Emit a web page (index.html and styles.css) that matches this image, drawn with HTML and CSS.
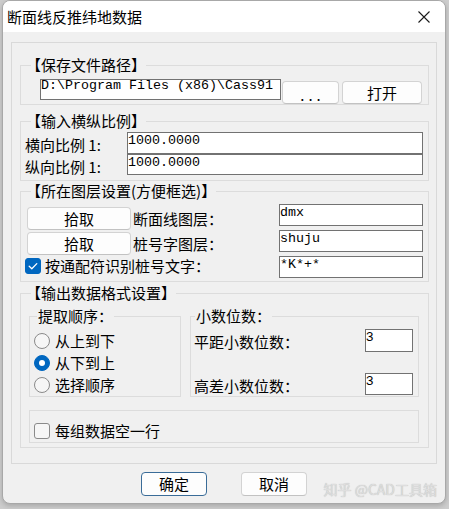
FILE: index.html
```html
<!DOCTYPE html>
<html lang="zh-CN">
<head>
<meta charset="utf-8">
<title>断面线反推纬地数据</title>
<link rel="stylesheet" href="styles.css">
</head>
<body>
<div class="window">
  <div class="titlebar">
    <span class="title">断面线反推纬地数据</span>
    <svg class="close" width="12" height="12" viewBox="0 0 12 12"><path d="M0.5 0.5 L11.5 11.5 M11.5 0.5 L0.5 11.5" stroke="#1a1a1a" stroke-width="1.1" fill="none"/></svg>
  </div>
  <div class="client">
    <div class="panel">
      <div class="group g1">
        <div class="legend">【保存文件路径】</div>
        <div class="path-row">
          <div class="edit mono path">D:\Program Files (x86)\Cass91</div>
          <div class="btn btn-dots">...</div>
          <div class="btn btn-open">打开</div>
        </div>
      </div>
      <div class="group g2">
        <div class="legend">【输入横纵比例】</div>
        <div class="scale-grid">
          <div class="lbl">横向比例 1:</div>
          <div class="edit mono">1000.0000</div>
          <div class="lbl">纵向比例 1:</div>
          <div class="edit mono">1000.0000</div>
        </div>
      </div>
      <div class="group g3">
        <div class="legend">【所在图层设置(方便框选)】</div>
        <div class="layer-row r1">
          <div class="btn">拾取</div>
          <div class="lbl">断面线图层：</div>
          <div class="edit mono">dmx</div>
        </div>
        <div class="layer-row r2">
          <div class="btn">拾取</div>
          <div class="lbl">桩号字图层：</div>
          <div class="edit mono">shuju</div>
        </div>
        <div class="layer-row r3">
          <span class="check on"><svg width="16" height="16" viewBox="0 0 16 16"><path d="M4.2 8.3 L6.8 10.8 L11.8 5.6" stroke="#fff" stroke-width="1.3" fill="none" stroke-linecap="round" stroke-linejoin="round"/></svg></span>
          <div class="lbl">按通配符识别桩号文字：</div>
          <div class="edit mono">*K*+*</div>
        </div>
      </div>
      <div class="group g4">
        <div class="legend">【输出数据格式设置】</div>
        <div class="sub-row">
          <div class="sub sg1">
            <div class="sublegend">提取顺序：</div>
            <div class="radios">
              <div class="radio-row"><span class="radio"></span><span class="rlbl">从上到下</span></div>
              <div class="radio-row"><span class="radio on"></span><span class="rlbl">从下到上</span></div>
              <div class="radio-row"><span class="radio"></span><span class="rlbl">选择顺序</span></div>
            </div>
          </div>
          <div class="sub sg2">
            <div class="sublegend">小数位数：</div>
            <div class="dec-row d1">
              <div class="lbl">平距小数位数：</div>
              <div class="edit num">3</div>
            </div>
            <div class="dec-row d2">
              <div class="lbl">高差小数位数：</div>
              <div class="edit num">3</div>
            </div>
          </div>
        </div>
        <div class="sub blank-box">
          <div class="blank-row">
            <span class="check"></span>
            <span class="rlbl">每组数据空一行</span>
          </div>
        </div>
      </div>
    </div>
    <div class="footer">
      <div class="btn btn-ok">确定</div>
      <div class="btn btn-cancel">取消</div>
    </div>
  </div>
  <div class="watermark">知乎 @CAD工具箱</div>
</div>
</body>
</html>
```
FILE: styles.css
```css
* { box-sizing: border-box; }
html, body { margin: 0; padding: 0; }
body {
  width: 449px;
  height: 509px;
  overflow: hidden;
  background: #cdcdcd;
  font-family: "Noto Sans CJK SC", "Noto Sans", sans-serif;
  font-size: 15px;
  color: #000;
}
.window {
  position: relative;
  margin-left: 2px;
  width: 444px;
  height: 504px;
  border: 1px solid #a8a8a8;
  border-radius: 8px;
  overflow: hidden;
  background: #f0f0f0;
  display: flex;
  flex-direction: column;
  box-shadow: 0 2px 5px rgba(0,0,0,0.18);
}
.titlebar {
  flex: none;
  height: 31px;
  background: #fff;
  display: flex;
  align-items: center;
  padding-left: 4px;
}
.title { line-height: 31px; }
.close { margin-left: auto; margin-right: 15px; }
.client { flex: 1; padding-top: 10px; }
.panel {
  margin-left: 8px;
  width: 426px;
  height: 422px;
  border: 1px solid #d9d9d9;
  padding: 0 7px 0 8px;
}
.group { border: 1px solid #dcdcdc; }
.legend {
  width: fit-content;
  margin: -11px 0 0 10px;
  text-indent: -5px;
  line-height: 20px;
  background: #f0f0f0;
  white-space: nowrap;
}
.g1 { margin-top: 22px; height: 40px; }
.g2 { margin-top: 16px; height: 60px; }
.g3 { margin-top: 10px; height: 91px; }
.g4 { margin-top: 11px; height: 155px; }

.edit {
  background: #fff;
  border: 1px solid #727272;
  white-space: nowrap;
  overflow: hidden;
}
.mono {
  font-family: "Liberation Mono", monospace;
  font-size: 13.33px;
  line-height: 16px;
}
.num {
  font-family: "Liberation Sans", sans-serif;
  font-size: 13.33px;
  line-height: 13px;
}
.btn {
  background: #fdfdfd;
  border: 1px solid #d3d3d3;
  border-bottom-color: #c2c2c2;
  border-radius: 4px;
  display: flex;
  align-items: center;
  justify-content: center;
  line-height: 20px;
}
.lbl { line-height: 22px; white-space: nowrap; }

.path-row { display: flex; align-items: flex-start; margin-top: 4px; }
.path { margin-left: 19px; width: 241px; height: 21px; line-height: 12px; }
.btn-dots { margin: 2px 0 0 1px; width: 57px; height: 23px; letter-spacing: 4px; padding: 4px 0 0 4px; }
.btn-open { margin: 2px 0 0 3px; width: 80px; height: 23px; }

.scale-grid {
  display: grid;
  grid-template-columns: 106px 296px;
  grid-template-rows: 22px 21px;
  margin-top: 1px;
}
.scale-grid .lbl { padding-left: 4px; margin-top: 2px; }

.layer-row { display: flex; align-items: flex-start; height: 26px; }
.r1 { margin-top: 3px; }
.r3 { height: 22px; }
.layer-row .btn { margin: 3px 0 0 6px; width: 104px; height: 23px; }
.r2 .btn { margin-top: 2px; }
.layer-row .lbl { margin: 4px 0 0 2px; }
.r2 .lbl { margin-top: 3px; }
.r3 .lbl { margin: 0 0 0 4px; line-height: 20px; }
.layer-row .edit { margin-left: auto; margin-right: 5px; width: 144px; height: 22px; }

.check {
  flex: none;
  display: block;
  width: 16px;
  height: 16px;
  border: 1px solid #8a8a8a;
  border-radius: 3px;
  background: #f6f6f6;
}
.check.on { background: #0067c0; border-color: #0067c0; }
.check svg { display: block; margin: -1px; }
.r3 .check { margin: 2px 0 0 4px; }

.sub-row { display: flex; margin: 13px 0 0 8px; gap: 9px; }
.sub { border: 1px solid #dcdcdc; }
.sg1 { width: 152px; height: 81px; }
.sg2 { width: 229px; height: 81px; }
.sublegend {
  width: fit-content;
  margin-top: -11px;
  padding: 0 1px;
  line-height: 20px;
  background: #f0f0f0;
  white-space: nowrap;
}
.sg1 .sublegend { margin-left: 7px; }
.sg2 .sublegend { margin-left: 4px; }
.radios { margin-top: 4px; }
.radio-row { display: flex; align-items: center; height: 22px; }
.radio {
  flex: none;
  width: 16px;
  height: 16px;
  margin-left: 4px;
  border-radius: 50%;
  border: 1px solid #8a8a8a;
  background: #f6f6f6;
  display: flex;
  align-items: center;
  justify-content: center;
}
.radio.on { background: #0067c0; border-color: #0067c0; }
.radio.on::after {
  content: "";
  width: 6px;
  height: 6px;
  border-radius: 50%;
  background: #fff;
}
.rlbl { margin-left: 5px; line-height: 22px; white-space: nowrap; }

.dec-row { display: flex; align-items: flex-start; }
.d1 { margin-top: 3px; height: 23px; }
.d2 { margin-top: 21px; height: 22px; }
.dec-row .lbl { margin: 2px 0 0 3px; }
.dec-row .edit { margin-left: auto; margin-right: 5px; width: 48px; height: 100%; }

.blank-box { margin: 13px 0 0 8px; width: 390px; height: 33px; }
.blank-row { display: flex; align-items: center; height: 16px; margin-top: 12px; }
.blank-row .check { margin-left: 4px; }
.blank-row .rlbl { line-height: 16px; }

.footer { display: flex; margin-top: 8px; }
.footer .btn { width: 66px; height: 24px; }
.btn-ok { margin-left: 138px; border-color: #3a6c98; }
.btn-cancel { margin-left: 34px; }

.watermark {
  position: absolute;
  right: 8px;
  bottom: 4px;
  font-size: 14px;
  line-height: 20px;
  color: #dedede;
  text-shadow: 0 0 1px rgba(0,0,0,0.28);
  white-space: nowrap;
}
```
